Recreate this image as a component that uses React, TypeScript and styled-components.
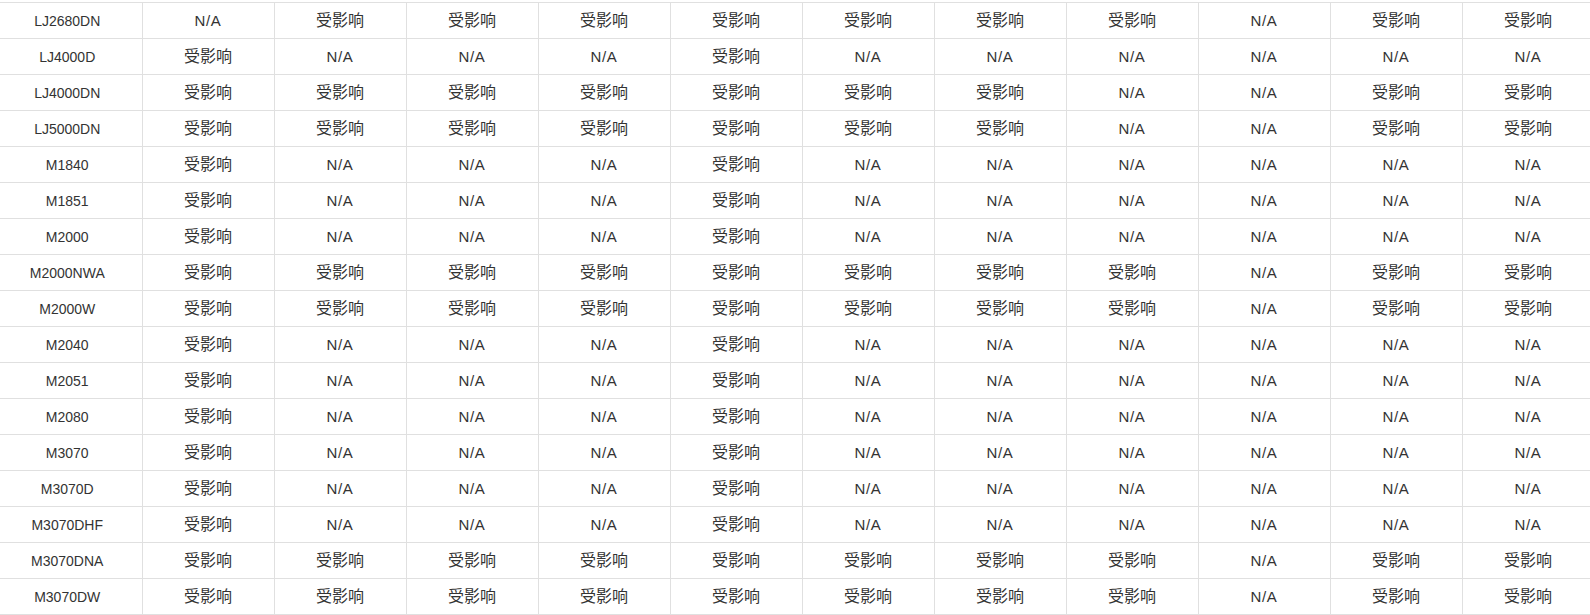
import React from "react";
import styled, { createGlobalStyle } from "styled-components";

const GlobalStyle = createGlobalStyle`
  html, body {
    margin: 0;
    padding: 0;
    background: #fff;
    overflow: hidden;
  }
  body {
    font-family: "Liberation Sans", "Noto Sans CJK SC", Arial, sans-serif;
    color: #333;
  }
`;

const Wrapper = styled.div`
  padding-top: 2px;
  width: 1590px;
  overflow: hidden;
`;

const Table = styled.table`
  border-collapse: collapse;
  table-layout: fixed;
  width: 1594px;
  font-size: 14px;
`;

const Col = styled.col<{ $w: number }>`
  width: ${({ $w }) => $w}px;
`;

const Row = styled.tr`
  height: 36px;
`;

const Cell = styled.td<{ $model?: boolean }>`
  padding: 0 ${({ $model }) => ($model ? "7px" : "0")} 0 0;
  border: 1px solid #e0e0e0;
  border-left: ${({ $model }) => ($model ? "none" : "1px solid #e0e0e0")};
  text-align: center;
  vertical-align: middle;
  white-space: nowrap;
  line-height: 20px;
`;

const Label = styled.span<{ $affected: boolean }>`
  font-size: ${({ $affected }) => ($affected ? "16px" : "15px")};
  letter-spacing: ${({ $affected }) => ($affected ? "0" : "0.6px")};
`;

const A = "受影响";
const N = "N/A";

// pattern keys for repeated rows
const patterns: Record<string, string[]> = {
  basic: [A, N, N, N, A, N, N, N, N, N, N],
  wide: [A, A, A, A, A, A, A, N, N, A, A],
  full: [A, A, A, A, A, A, A, A, N, A, A],
};

const rows: { model: string; cells: string[] }[] = [
  { model: "LJ2680DN", cells: [N, A, A, A, A, A, A, A, N, A, A] },
  { model: "LJ4000D", cells: patterns.basic },
  { model: "LJ4000DN", cells: patterns.wide },
  { model: "LJ5000DN", cells: patterns.wide },
  { model: "M1840", cells: patterns.basic },
  { model: "M1851", cells: patterns.basic },
  { model: "M2000", cells: patterns.basic },
  { model: "M2000NWA", cells: patterns.full },
  { model: "M2000W", cells: patterns.full },
  { model: "M2040", cells: patterns.basic },
  { model: "M2051", cells: patterns.basic },
  { model: "M2080", cells: patterns.basic },
  { model: "M3070", cells: patterns.basic },
  { model: "M3070D", cells: patterns.basic },
  { model: "M3070DHF", cells: patterns.basic },
  { model: "M3070DNA", cells: patterns.full },
  { model: "M3070DW", cells: patterns.full },
];

export default function App() {
  return (
    <>
      <GlobalStyle />
      <Wrapper>
        <Table>
          <colgroup>
            <Col $w={142} />
            {Array.from({ length: 11 }).map((_, i) => (
              <Col key={i} $w={132} />
            ))}
          </colgroup>
          <tbody>
            {rows.map((r) => (
              <Row key={r.model}>
                <Cell $model>{r.model}</Cell>
                {r.cells.map((c, i) => (
                  <Cell key={i}>
                    <Label $affected={c === A}>{c}</Label>
                  </Cell>
                ))}
              </Row>
            ))}
          </tbody>
        </Table>
      </Wrapper>
    </>
  );
}
